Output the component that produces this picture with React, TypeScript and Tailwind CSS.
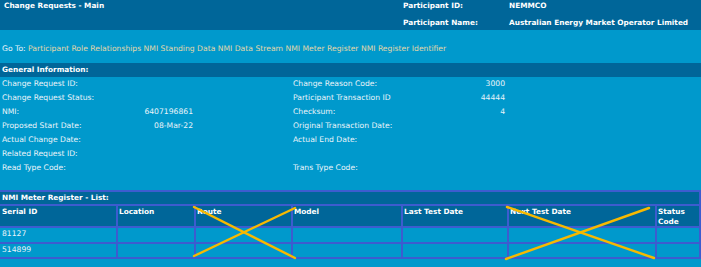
import React from "react";

const dark = "bg-[#006699]";

const leftRows: [string, string][] = [
  ["Change Request ID:", ""],
  ["Change Request Status:", ""],
  ["NMI:", "6407196861"],
  ["Proposed Start Date:", "08-Mar-22"],
  ["Actual Change Date:", ""],
  ["Related Request ID:", ""],
  ["Read Type Code:", ""],
];
const rightRows: [string, string][] = [
  ["Change Reason Code:", "3000"],
  ["Participant Transaction ID", "44444"],
  ["Checksum:", "4"],
  ["Original Transaction Date:", ""],
  ["Actual End Date:", ""],
  ["", ""],
  ["Trans Type Code:", ""],
];

const cols = ["Serial ID", "Location", "Route", "Model", "Last Test Date", "Next Test Date", "Status Code"];
const data = ["81127", "514899"];

const bold = "font-bold text-white text-[7.35px]";

export default function App() {
  return (
    <div
      className="relative w-[701px] h-[267px] overflow-hidden bg-[#0099cc] text-[#eaf4fa] text-[7.65px]"
      style={{ fontFamily: '"DejaVu Sans", Verdana, sans-serif' }}
    >
      {/* Header */}
      <div className={`${dark} h-[30px] flex`}>
        <div className={`w-[403px] pl-[4px] leading-[12px] ${bold}`}>Change Requests - Main</div>
        <div className={`grid grid-cols-[106px_1fr] gap-y-[4px] leading-[12px] ${bold}`}>
          <div>Participant ID:</div>
          <div>NEMMCO</div>
          <div>Participant Name:</div>
          <div>Australian Energy Market Operator Limited</div>
        </div>
      </div>

      {/* Go To */}
      <div className="h-[33px] pt-[13px] pl-[2px] leading-[12px]">
        <span>Go To: </span>
        <span className="text-[#e3d7a8]">
          Participant Role Relationships NMI Standing Data NMI Data Stream NMI Meter Register NMI Register Identifier
        </span>
      </div>

      {/* General Information */}
      <div className={`${dark} h-[14px] pl-[2px] leading-[14px] ${bold}`}>General Information:</div>
      <div className="grid grid-cols-[193px_212px] gap-x-[100px] leading-[14px]">
        {leftRows.map((l, i) => (
          <React.Fragment key={i}>
            <div className="flex justify-between pl-[2px] h-[14px]">
              <span>{l[0]}</span>
              <span>{l[1]}</span>
            </div>
            <div className="flex justify-between h-[14px]">
              <span>{rightRows[i][0]}</span>
              <span>{rightRows[i][1]}</span>
            </div>
          </React.Fragment>
        ))}
      </div>

      {/* Table */}
      <div className="mt-[15px] bg-[#3d5ccf] pt-[2px] pb-[2px] pr-[2px] grid grid-cols-[116px_76px_95px_108px_104px_146px_42px] gap-[2px] leading-[9.5px]">
        <div className={`${dark} col-span-7 h-[12px] pl-[2px] leading-[12px] ${bold}`}>
          NMI Meter Register - List:
        </div>
        {cols.map((c, i) => (
          <div key={c} className={`${dark} h-[20px] pt-[1px] ${bold} ${i === 0 ? "pl-[2px]" : "pl-[1px]"}`}>
            {c === "Status Code" ? (
              <>
                Status
                <br />
                Code
              </>
            ) : (
              c
            )}
          </div>
        ))}
        {data.map((d, r) =>
          cols.map((c, i) => (
            <div
              key={c + r}
              className={`bg-[#0099cc] ${r === 0 ? "h-[14px]" : "h-[13px]"} pt-[1px] ${i === 0 ? "pl-[2px]" : "pl-[1px]"} leading-[10px]`}
            >
              {i === 0 ? d : ""}
            </div>
          ))
        )}
      </div>

      {/* Strike-through overlays */}
      <svg className="absolute left-0 top-0 pointer-events-none" width="701" height="267" viewBox="0 0 701 267">
        <g stroke="#f7b900" strokeWidth="2.4" strokeLinecap="round">
          <line x1="194" y1="207" x2="295" y2="258" />
          <line x1="194" y1="256" x2="295" y2="208" />
          <line x1="507" y1="207" x2="654" y2="258" />
          <line x1="506" y1="259" x2="649" y2="208" />
        </g>
      </svg>
    </div>
  );
}
